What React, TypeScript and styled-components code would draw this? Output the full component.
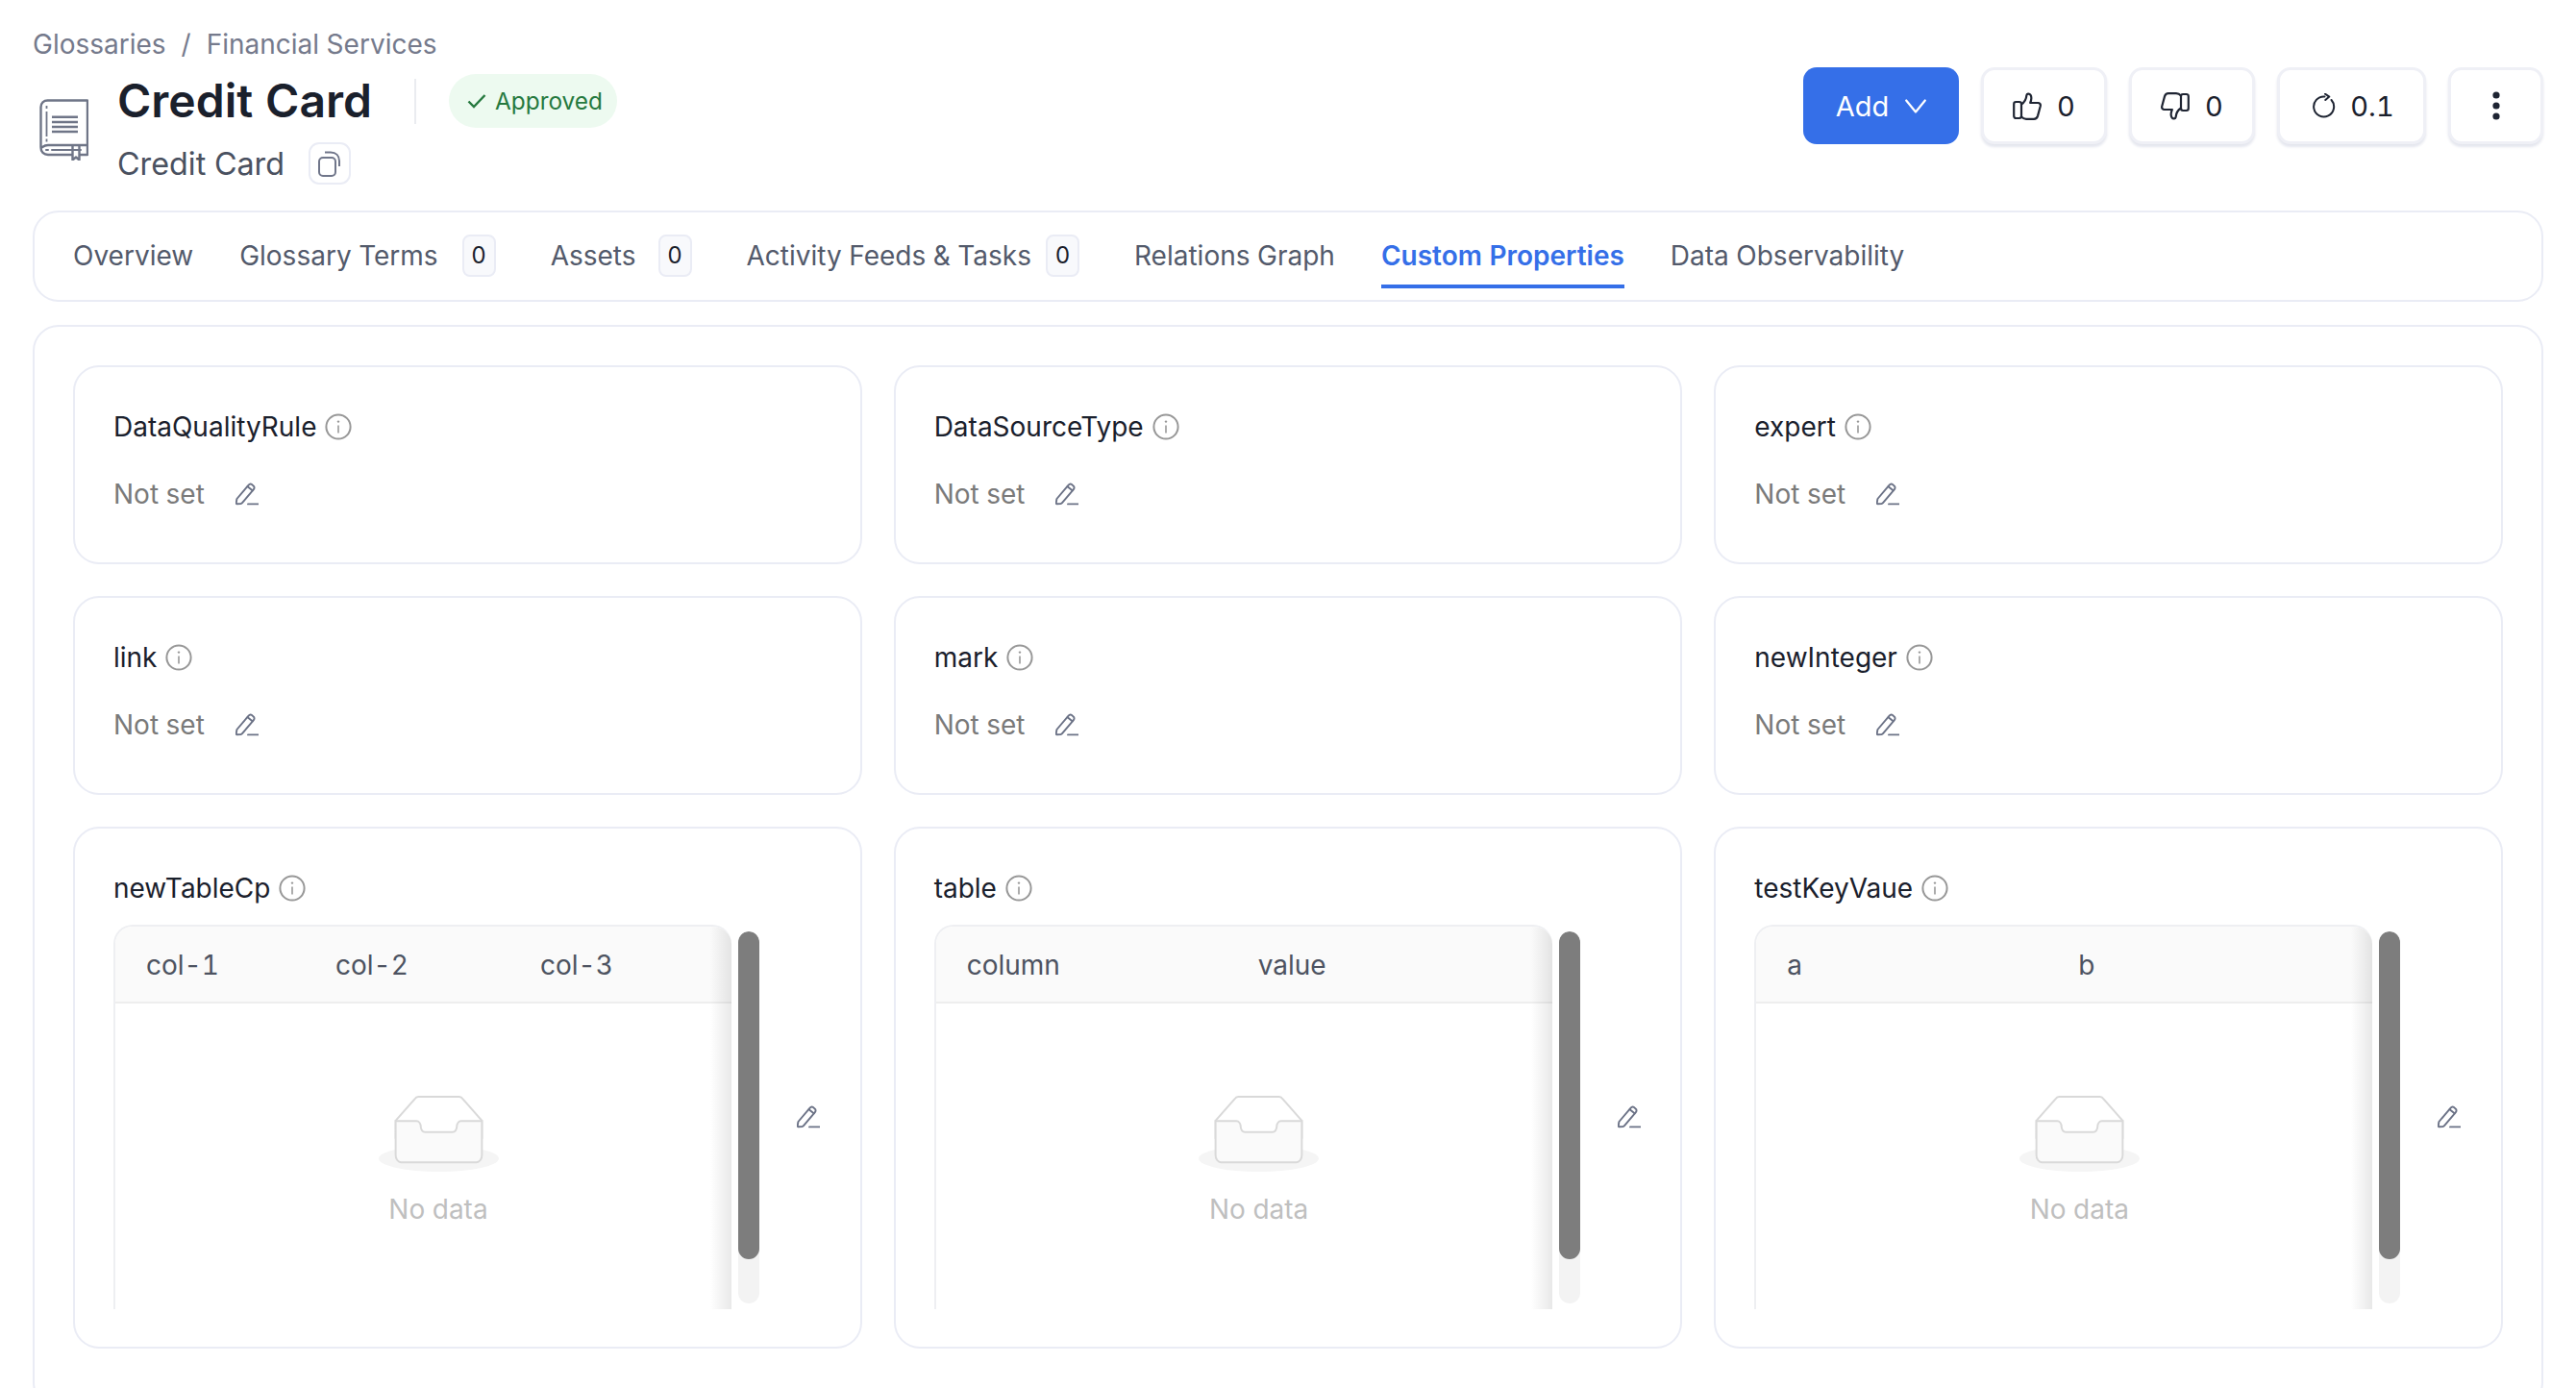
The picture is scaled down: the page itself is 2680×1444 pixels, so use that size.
import React from "react";
import styled, { createGlobalStyle } from "styled-components";

const Global = createGlobalStyle`
  html, body { margin: 0; padding: 0; background: #fff; height: 1444px; overflow: hidden; }
  body { font-family: Inter, "Liberation Sans", sans-serif; font-variant-numeric: tabular-nums; }
  * { box-sizing: border-box; }
`;

const Page = styled.div`
  width: 2680px;
  padding: 32px 34px 0;
`;
const Header = styled.header`
  display: flex;
  justify-content: space-between;
  align-items: flex-start;
  height: 187px;
`;
const HeadLeft = styled.div`
  display: flex;
  flex-direction: column;
`;
const Breadcrumb = styled.div`
  display: flex;
  gap: 16px;
  font-size: 28px;
  line-height: 28px;
  color: #757a8c;
`;
const TitleRow = styled.div`
  display: flex;
  align-items: center;
  gap: 30px;
  padding-left: 7px;
  margin-top: 17px;
`;
const TitleCol = styled.div`
  display: flex;
  flex-direction: column;
`;
const TitleLine = styled.div`
  display: flex;
  align-items: center;
  height: 56px;
`;
const Title = styled.h1`
  margin: 0;
  font-size: 48px;
  font-weight: 600;
  line-height: 56px;
  color: #1a202c;
`;
const Sep = styled.span`
  width: 2px;
  height: 47px;
  background: #eaecf0;
  margin: 0 34px 0 44px;
`;
const Pill = styled.span`
  display: inline-flex;
  align-items: center;
  gap: 9px;
  height: 56px;
  padding: 0 15px 0 19px;
  border-radius: 28px;
  background: #edfaf0;
  color: #26793f;
  font-size: 24.4px;
`;
const SubLine = styled.div`
  display: flex;
  align-items: center;
  gap: 25px;
  margin-top: 15px;
  height: 44px;
`;
const Sub = styled.span`
  font-size: 32.3px;
  color: #4a5160;
`;
const CopyBtn = styled.span`
  display: inline-flex;
  align-items: center;
  justify-content: center;
  width: 44px;
  height: 44px;
  border: 2px solid #eaecf5;
  border-radius: 11px;
`;
const Actions = styled.div`
  display: flex;
  gap: 23px;
  margin-top: 38px;
`;
const Primary = styled.button`
  display: flex;
  align-items: center;
  gap: 17px;
  height: 80px;
  width: 162px;
  justify-content: center;
  border: none;
  border-radius: 14px;
  background: #356fe8;
  color: #fff;
  font: 400 29px Inter, sans-serif;
`;
const Btn = styled.button<{ $w: number; $gap?: number; $pl?: number }>`
  display: flex;
  align-items: center;
  justify-content: center;
  gap: ${(p) => p.$gap ?? 16}px;
  width: ${(p) => p.$w}px;
  height: 80px;
  padding: 0 0 0 ${(p) => p.$pl ?? 0}px;
  background: #fff;
  border: 3px solid #eff0f6;
  border-radius: 14px;
  box-shadow: 0 3px 3px #e4e6ee;
  color: #1a202c;
  font: 400 29px Inter, sans-serif;
  font-variant-numeric: tabular-nums;
`;
const TabBar = styled.nav`
  display: flex;
  align-items: stretch;
  height: 95px;
  padding-left: 40px;
  border: 2px solid #eaecf5;
  border-radius: 27px;
`;
const Tab = styled.div<{ $active?: boolean; $gap?: number }>`
  position: relative;
  display: flex;
  align-items: center;
  margin-right: ${(p) => p.$gap ?? 48}px;
  padding-bottom: 2px;
  font-size: 28px;
  font-weight: ${(p) => (p.$active ? 600 : 400)};
  color: ${(p) => (p.$active ? "#356fe8" : "#535a6b")};
  &::after {
    content: "";
    display: ${(p) => (p.$active ? "block" : "none")};
    position: absolute;
    left: 0;
    right: 0;
    top: 75px;
    height: 4px;
    background: #356fe8;
  }
`;
const Badge = styled.span<{ $gap: number }>`
  display: inline-flex;
  align-items: center;
  justify-content: center;
  width: 35px;
  height: 44px;
  margin-left: ${(p) => p.$gap}px;
  background: #f8f9fc;
  border: 2px solid #eaecf5;
  border-radius: 8px;
  font-size: 24px;
  color: #1a202c;
`;
const Panel = styled.section`
  margin-top: 24px;
  padding: 40px 40px 60px;
  border: 2px solid #eaecf5;
  border-radius: 27px;
`;
const Grid = styled.div`
  display: grid;
  grid-template-columns: repeat(3, 1fr);
  gap: 33px;
`;
const Card = styled.article`
  display: flex;
  flex-direction: column;
  border: 2px solid #eaecf5;
  border-radius: 27px;
  padding: 42px 40px 39px;
`;
const LabelRow = styled.div`
  display: flex;
  align-items: center;
  gap: 9px;
  height: 40px;
  font-size: 28px;
  color: #1a202c;
`;
const ValueRow = styled.div`
  display: flex;
  align-items: center;
  gap: 32px;
  height: 40px;
  margin: 30px 0 12px;
  font-size: 28px;
  color: #7a7a7a;
`;
const TableRow = styled.div`
  display: flex;
  align-items: center;
  height: 400px;
  margin-top: 18px;
`;
const TableFrame = styled.div`
  position: relative;
  width: 643px;
  height: 400px;
  flex: none;
  border-left: 2px solid #eeeff2;
  border-top: 2px solid #eeeff2;
  border-top-left-radius: 20px;
  border-top-right-radius: 20px;
  overflow: hidden;
`;
const RightShadow = styled.div`
  position: absolute;
  top: 0;
  right: 0;
  bottom: 0;
  width: 22px;
  background: linear-gradient(to right, rgba(0, 0, 0, 0), rgba(0, 0, 0, 0.09));
`;
const THead = styled.div<{ $cols: string }>`
  display: grid;
  grid-template-columns: ${(p) => p.$cols};
  align-items: center;
  height: 80px;
  padding-top: 2px;
  background: #fafafa;
  border-bottom: 2px solid #eeeeee;
  font-size: 28px;
  color: #4d5361;
`;
const TH = styled.span`
  padding-left: 32px;
`;
const Empty = styled.div`
  display: flex;
  flex-direction: column;
  align-items: center;
  padding: 95px 0 0 31px;
  color: #bfbfbf;
  font-size: 28px;
`;
const EmptyText = styled.span`
  margin-top: 19px;
  line-height: 40px;
`;
const Track = styled.div`
  flex: none;
  align-self: flex-start;
  width: 22px;
  height: 387px;
  margin: 7px 0 0 7px;
  border-radius: 11px;
  background: #f3f3f3;
  overflow: hidden;
`;
const Thumb = styled.div`
  height: 341px;
  border-radius: 11px;
  background: #7d7d7d;
`;
const EditSlot = styled.span`
  display: inline-flex;
  margin-left: 39px;
`;

const Pencil = () => (
  <svg width="24" height="24" viewBox="0 0 24 24" fill="none" stroke="#6b7286" strokeWidth="1.9" strokeLinejoin="round" strokeLinecap="round">
    <path d="M1.5 22.3c-.6 0-.9-.4-.8-1L1.4 17 13.6 2.6c1-1.2 2.4-1.4 3.5-.5l1.6 1.4c1.1.9 1.2 2.4.2 3.6L7 21.2c-.4.5-1 .8-1.6.9l-3.9.2Z" />
    <path d="M12.6 4.2l5 4.1" />
    <path d="M13 22.4h10.5" />
  </svg>
);
const Info = () => (
  <svg width="28" height="28" viewBox="0 0 28 28" fill="none">
    <circle cx="14" cy="14" r="12.6" stroke="#989898" strokeWidth="2" />
    <path d="M14 12.5v8" stroke="#989898" strokeWidth="1.6" />
    <circle cx="14" cy="8.6" r="1.2" fill="#989898" />
  </svg>
);
const Book = () => (
  <svg width="51" height="64" viewBox="0 0 51 64" fill="none" stroke="#6f7587" strokeWidth="2.4">
    <path d="M1.5 50V8.5C1.5 4 4.5 1.5 8.5 1.5H50V58H41.5M34.5 58H9C4.5 58 1.5 55 1.5 50.5 1.5 52 4 48 9 48H50" strokeLinejoin="round" />
    <path d="M7.5 7v3M7.5 13v26M7.5 41.5v3" strokeWidth="1.8" />
    <path d="M13 18.7h27M13 24h27M13 29h27M13 34h27" strokeWidth="2.6" />
    <path d="M34.5 48v15.5l3.5-3 3.5 3V48" strokeLinejoin="round" />
    <path d="M7 53h2M13 53h30" strokeWidth="2" strokeLinecap="round" />
  </svg>
);
const Copy = () => (
  <svg width="24" height="27" viewBox="0 0 24 27" fill="none" stroke="#70768a" strokeWidth="2">
    <rect x="1" y="7" width="17" height="19" rx="4" />
    <path d="M7 1.5h6c5.5 0 9 3.5 9 9V16" />
  </svg>
);
const Check = () => (
  <svg width="20" height="16" viewBox="0 0 20 16" fill="none" stroke="#26793f" strokeWidth="2.4">
    <path d="M1.5 8.5l5.5 5.5L18.5 2" />
  </svg>
);
const Chevron = () => (
  <svg width="22" height="15" viewBox="0 0 22 15" fill="none" stroke="#fff" strokeWidth="2.2" strokeLinecap="round" strokeLinejoin="round">
    <path d="M1.2 1.5l9.8 12 9.8-12" />
  </svg>
);
const Thumb2 = ({ down }: { down?: boolean }) => (
  <svg width="30" height="29" viewBox="0 0 30 29" fill="none" stroke="#1f2533" strokeWidth="2.2" strokeLinejoin="round" style={down ? { transform: "rotate(180deg)" } : undefined}>
    <rect x="1.2" y="10" width="7.8" height="17" rx="2.2" />
    <path d="M9 12.5c3.2-2 5-5 5.4-9.3.2-1.7 2.7-2.4 4-.5 1.5 2.2 1 5.4-.2 8.3h8c1.9 0 3 1.5 2.6 3.3L26 24.6c-.6 2-2 3.2-4 3.2h-8c-2 0-3.6-.7-5-2.4" />
  </svg>
);
const Refresh = () => (
  <svg width="24" height="26" viewBox="0 0 24 26" fill="none" stroke="#1f2533" strokeWidth="2" strokeLinecap="round" strokeLinejoin="round">
    <path d="M19.5 7A10.5 10.5 0 1 1 12.5 3.5" />
    <path d="M13 .7l4.3 2.9-4 3.4" />
  </svg>
);
const Dots = () => (
  <svg width="8" height="30" viewBox="0 0 8 30" fill="#1f2533">
    <circle cx="4" cy="4" r="3.6" />
    <circle cx="4" cy="15" r="3.6" />
    <circle cx="4" cy="26" r="3.6" />
  </svg>
);
const EmptyIcon = () => (
  <svg width="125" height="80" viewBox="0 0 64 41">
    <g transform="translate(0 1)" fill="none" fillRule="evenodd">
      <ellipse fill="#f5f5f5" cx="32" cy="33" rx="32" ry="7" />
      <g fillRule="nonzero" stroke="#d9d9d9">
        <path d="M55 12.76L44.854 1.258C44.367.474 43.656 0 42.907 0H21.093c-.749 0-1.46.474-1.947 1.257L9 12.761V22h46v-9.24z" />
        <path d="M41.613 15.931c0-1.605.994-2.93 2.227-2.931H55v18.137C55 33.26 53.68 35 52.05 35h-40.1C10.32 35 9 33.259 9 31.137V13h11.16c1.233 0 2.227 1.323 2.227 2.928v.022c0 1.605 1.005 2.901 2.237 2.901h14.752c1.232 0 2.237-1.308 2.237-2.913v-.007z" fill="#fafafa" />
      </g>
    </g>
  </svg>
);

const Label = ({ text }: { text: string }) => (
  <LabelRow>
    {text}
    <Info />
  </LabelRow>
);
const TextCard = ({ name }: { name: string }) => (
  <Card>
    <Label text={name} />
    <ValueRow>
      Not set
      <Pencil />
    </ValueRow>
  </Card>
);
const TableCard = ({ name, headers, cols }: { name: string; headers: string[]; cols: string }) => (
  <Card>
    <Label text={name} />
    <TableRow>
      <TableFrame>
        <THead $cols={cols}>
          {headers.map((h) => (
            <TH key={h}>{h}</TH>
          ))}
        </THead>
        <Empty>
          <EmptyIcon />
          <EmptyText>No data</EmptyText>
        </Empty>
        <RightShadow />
      </TableFrame>
      <Track>
        <Thumb />
      </Track>
      <EditSlot>
        <Pencil />
      </EditSlot>
    </TableRow>
  </Card>
);

export default function App() {
  return (
    <Page>
      <Global />
      <Header>
        <HeadLeft>
          <Breadcrumb>
            <span>Glossaries</span>
            <span>/</span>
            <span>Financial Services</span>
          </Breadcrumb>
          <TitleRow>
            <Book />
            <TitleCol>
              <TitleLine>
                <Title>Credit Card</Title>
                <Sep />
                <Pill>
                  <Check />
                  Approved
                </Pill>
              </TitleLine>
              <SubLine>
                <Sub>Credit Card</Sub>
                <CopyBtn>
                  <Copy />
                </CopyBtn>
              </SubLine>
            </TitleCol>
          </TitleRow>
        </HeadLeft>
        <Actions>
          <Primary>
            Add
            <Chevron />
          </Primary>
          <Btn $w={131}>
            <Thumb2 />0
          </Btn>
          <Btn $w={131}>
            <Thumb2 down />0
          </Btn>
          <Btn $w={155} $gap={15} $pl={4}>
            <Refresh />0.1
          </Btn>
          <Btn $w={99}>
            <Dots />
          </Btn>
        </Actions>
      </Header>
      <TabBar>
        <Tab>Overview</Tab>
        <Tab $gap={57}>
          Glossary Terms<Badge $gap={25}>0</Badge>
        </Tab>
        <Tab $gap={57}>
          Assets<Badge $gap={23}>0</Badge>
        </Tab>
        <Tab $gap={57}>
          Activity Feeds &amp; Tasks<Badge $gap={15}>0</Badge>
        </Tab>
        <Tab>Relations Graph</Tab>
        <Tab $active>Custom Properties</Tab>
        <Tab>Data Observability</Tab>
      </TabBar>
      <Panel>
        <Grid>
          <TextCard name="DataQualityRule" />
          <TextCard name="DataSourceType" />
          <TextCard name="expert" />
          <TextCard name="link" />
          <TextCard name="mark" />
          <TextCard name="newInteger" />
          <TableCard name="newTableCp" headers={["col-1", "col-2", "col-3"]} cols="197px 213px 1fr" />
          <TableCard name="table" headers={["column", "value"]} cols="303px 1fr" />
          <TableCard name="testKeyVaue" headers={["a", "b"]} cols="303px 1fr" />
        </Grid>
      </Panel>
    </Page>
  );
}
